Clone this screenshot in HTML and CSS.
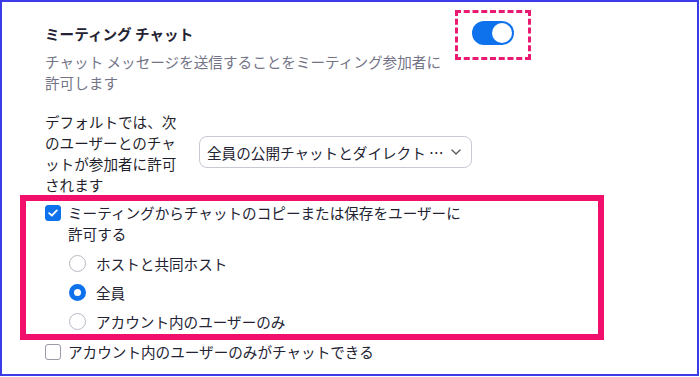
FILE: index.html
```html
<!DOCTYPE html>
<html lang="ja">
<head>
<meta charset="utf-8">
<link rel="stylesheet" href="styles.css">
</head>
<body>
<div class="page">
  <div class="header">
    <div class="intro">
      <div class="title">ミーティング チャット</div>
      <div class="desc">チャット メッセージを送信することをミーティング参加者に<br>許可します</div>
    </div>
    <div class="toggle-mark">
      <span class="toggle"><span class="knob"></span></span>
    </div>
  </div>

  <div class="setting">
    <div class="setting-label">デフォルトでは、次<br>のユーザーとのチャ<br>ットが参加者に許可<br>されます</div>
    <div class="select">
      <span class="select-text">全員の公開チャットとダイレクト …</span>
      <svg class="chevron" width="10" height="6" viewBox="0 0 10 6"><path d="M1 1l4 4 4-4" fill="none" stroke="#555" stroke-width="1.3" stroke-linecap="round" stroke-linejoin="round"/></svg>
    </div>
  </div>

  <div class="highlight">
    <div class="check-row">
      <span class="checkbox checked">
        <svg width="10" height="8" viewBox="0 0 10 8"><path d="M1.2 4.2l2.6 2.4L8.8 1.4" fill="none" stroke="#fff" stroke-width="1.8" stroke-linecap="round" stroke-linejoin="round"/></svg>
      </span>
      <span class="check-label">ミーティングからチャットのコピーまたは保存をユーザーに<br>許可する</span>
    </div>
    <div class="radios">
      <div class="radio-row"><span class="radio"></span><span>ホストと共同ホスト</span></div>
      <div class="radio-row"><span class="radio selected"></span><span>全員</span></div>
      <div class="radio-row"><span class="radio"></span><span>アカウント内のユーザーのみ</span></div>
    </div>
  </div>

  <div class="check-row last">
    <span class="checkbox"></span>
    <span class="check-label">アカウント内のユーザーのみがチャットできる</span>
  </div>
</div>
</body>
</html>
```

FILE: styles.css
```css
html, body {
  margin: 0;
  padding: 0;
  background: #ffffff;
}

body {
  font-family: "Noto Sans CJK JP", "Noto Sans", sans-serif;
  font-size: 14.6px;
  color: #232333;
}

.page {
  box-sizing: border-box;
  width: 699px;
  height: 376px;
  border: 2px solid #3b3be8;
  padding: 21px 0 0 43px;
  overflow: hidden;
}

.header {
  display: flex;
  align-items: flex-start;
}

.intro {
  flex: none;
  width: 410px;
}

.title {
  font-weight: 700;
  line-height: 21px;
}

.desc {
  margin-top: 7px;
  line-height: 21px;
  color: #747487;
}

.toggle-mark {
  flex: none;
  box-sizing: border-box;
  width: 76px;
  height: 50px;
  margin-top: -13px;
  border: 3px dashed #ea1a70;
  display: flex;
  justify-content: center;
  padding-top: 8px;
}

.toggle {
  position: relative;
  display: block;
  width: 42px;
  height: 24px;
  border-radius: 12px;
  background: #0e72ed;
}

.knob {
  position: absolute;
  top: 2px;
  right: 2px;
  width: 20px;
  height: 20px;
  border-radius: 50%;
  background: #ffffff;
}

.setting {
  margin-top: 18px;
  display: flex;
  align-items: center;
  gap: 20px;
}

.setting-label {
  flex: none;
  width: 134px;
  line-height: 21px;
  font-weight: 400;
  color: #1f1f2b;
}

.select {
  box-sizing: border-box;
  width: 273px;
  height: 32px;
  border: 1px solid #c9c9d4;
  border-radius: 8px;
  padding: 0 10px 0 7px;
  display: flex;
  align-items: center;
  justify-content: space-between;
  margin-top: -2px;
}

.select-text {
  white-space: nowrap;
}

.chevron {
  flex: none;
}

.highlight {
  box-sizing: border-box;
  width: 584px;
  height: 145px;
  margin-left: -25px;
  border: 6px solid #f20f6c;
  padding: 1px 0 0 19px;
}

.check-row {
  display: flex;
  align-items: flex-start;
  gap: 7px;
}

.check-label {
  line-height: 21px;
}

.checkbox {
  flex: none;
  box-sizing: border-box;
  width: 16px;
  height: 16px;
  margin-top: 3px;
  border: 1px solid #9a9aa8;
  border-radius: 3px;
  background: #fff;
  display: flex;
  align-items: center;
  justify-content: center;
}

.checkbox.checked {
  border-color: #0e72ed;
  background: #0e72ed;
}

.radios {
  margin-top: 5px;
  margin-left: 24px;
}

.radio-row {
  height: 29px;
  display: flex;
  align-items: center;
  gap: 10px;
}

.radio {
  flex: none;
  box-sizing: border-box;
  width: 17px;
  height: 17px;
  border: 1px solid #b9b9c4;
  border-radius: 50%;
  background: #fff;
}

.radio.selected {
  border: 5px solid #0e72ed;
}

.check-row.last {
  margin-top: 1px;
}

.check-row.last .check-label {
  line-height: 22px;
}
```
